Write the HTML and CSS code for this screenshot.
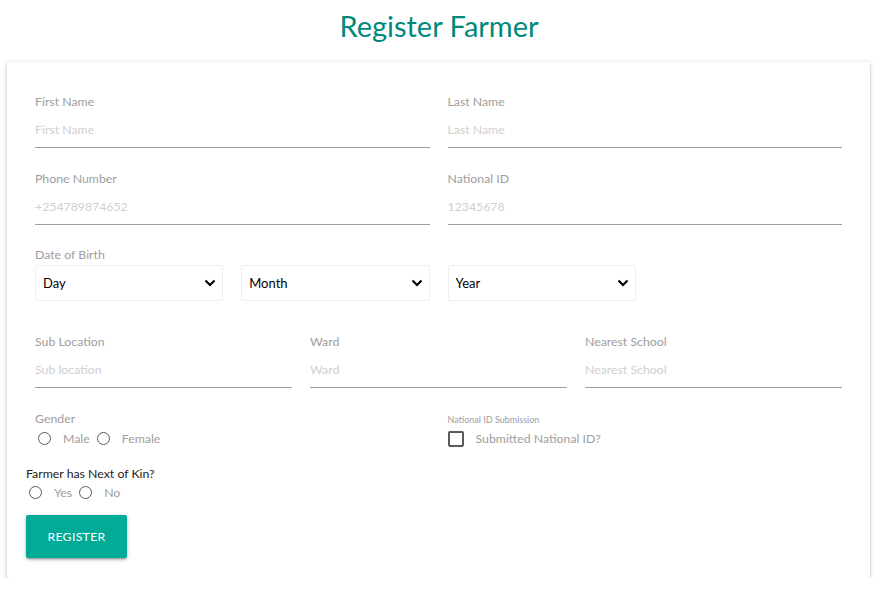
FILE: index.html
```html
<!DOCTYPE html>
<html lang="en">
<head>
<meta charset="utf-8">
<title>Register Farmer</title>
<link rel="stylesheet" href="styles.css">
</head>
<body>
<h1 class="title">Register Farmer</h1>
<form class="card">
  <div class="fields">
    <div class="row row-2">
      <div class="field">
        <label class="label">First Name</label>
        <input class="input" type="text" placeholder="First Name">
      </div>
      <div class="field">
        <label class="label">Last Name</label>
        <input class="input" type="text" placeholder="Last Name">
      </div>
    </div>
    <div class="row row-2">
      <div class="field">
        <label class="label">Phone Number</label>
        <input class="input" type="text" placeholder="+254789874652">
      </div>
      <div class="field">
        <label class="label">National ID</label>
        <input class="input" type="text" placeholder="12345678">
      </div>
    </div>
    <div class="dob">
      <label class="label">Date of Birth</label>
      <div class="row row-4">
        <select class="select"><option>Day</option></select>
        <select class="select"><option>Month</option></select>
        <select class="select"><option>Year</option></select>
      </div>
    </div>
    <div class="row row-3">
      <div class="field">
        <label class="label">Sub Location</label>
        <input class="input" type="text" placeholder="Sub location">
      </div>
      <div class="field">
        <label class="label">Ward</label>
        <input class="input" type="text" placeholder="Ward">
      </div>
      <div class="field">
        <label class="label">Nearest School</label>
        <input class="input" type="text" placeholder="Nearest School">
      </div>
    </div>
    <div class="row row-2 choices">
      <div class="group">
        <span class="label">Gender</span>
        <div class="options">
          <label class="option"><span class="radio"></span><span class="opt-text">Male</span></label>
          <label class="option"><span class="radio"></span><span class="opt-text">Female</span></label>
        </div>
      </div>
      <div class="group">
        <span class="label small">National ID Submission</span>
        <div class="options">
          <label class="option check-option"><span class="checkbox"></span><span class="opt-text">Submitted National ID?</span></label>
        </div>
      </div>
    </div>
  </div>
  <div class="kin">
    <span class="kin-label">Farmer has Next of Kin?</span>
    <div class="options">
      <label class="option"><span class="radio"></span><span class="opt-text">Yes</span></label>
      <label class="option"><span class="radio"></span><span class="opt-text">No</span></label>
    </div>
  </div>
  <button class="btn" type="button">REGISTER</button>
</form>
</body>
</html>
```
FILE: styles.css
```css
* { box-sizing: border-box; }
html, body { margin: 0; background: #fff; }
body {
  font-family: Lato, "Open Sans", sans-serif;
  color: #9e9e9e;
}
.title {
  margin: 10px 0 21px;
  text-align: center;
  font-weight: 400;
  font-size: 29px;
  line-height: 31px;
  color: #00897b;
}
.card {
  margin: 0 8px 0 7px;
  background: #fff;
  border-radius: 2px;
  box-shadow: 0 2px 2px 0 rgba(0,0,0,.14), 0 3px 1px -2px rgba(0,0,0,.12), 0 1px 5px 0 rgba(0,0,0,.2);
  padding: 31px 19px 20px;
}
.fields { padding: 0 9px; }
.row { display: grid; column-gap: 18px; }
.row-2 { grid-template-columns: 1fr 1fr; }
.row-3 { grid-template-columns: 1fr 1fr 1fr; }
.row-4 { grid-template-columns: repeat(4, 1fr); }
.field { display: flex; flex-direction: column; }
.row-2, .row-3 { margin-bottom: 22px; }
.label {
  display: block;
  font-size: 12.3px;
  line-height: 16px;
  color: #9e9e9e;
}
.field .label { padding-top: 1px; }
.label.small { font-size: 9px; line-height: 14px; margin-top: 2px; }
.input {
  height: 38px;
  border: 0;
  border-bottom: 1px solid #9e9e9e;
  padding: 2px 0 0;
  font: inherit;
  font-size: 12.3px;
  color: #333;
  outline: none;
  background: transparent;
}
.input::placeholder { color: #cfcfcf; }
.dob { margin-bottom: 32px; }
.dob .label { margin-bottom: 2px; }
.select {
  appearance: none;
  -webkit-appearance: none;
  height: 36px;
  border: 1px solid #efefef;
  border-radius: 2px;
  background: #fff url("data:image/svg+xml;utf8,<svg xmlns='http://www.w3.org/2000/svg' width='12' height='8' viewBox='0 0 12 8'><path d='M1.5 1.5l4.5 4.5 4.5-4.5' fill='none' stroke='black' stroke-width='2.2'/></svg>") no-repeat right 6px center;
  padding: 0 7px;
  font-family: Lato, sans-serif;
  font-size: 13px;
  color: #000;
}
.choices { margin-bottom: 18px; padding-top: 1px; }
.group { display: flex; flex-direction: column; }
.options { display: flex; align-items: center; height: 19px; margin-top: 2px; }
.option { display: flex; align-items: center; font-size: 12.3px; color: #9e9e9e; }
.radio {
  width: 13px; height: 13px;
  border: 1.5px solid #5a5a5a;
  border-radius: 50%;
  margin: 0 12px 0 3px;
}
.opt-text { margin-right: 4px; }
.checkbox {
  width: 16px; height: 16px;
  border: 2px solid #5a5a5a;
  border-radius: 2px;
  margin-right: 12px;
}
.kin { margin-bottom: 13px; }
.kin .options { margin-top: 1px; }
.kin-label { display: block; font-size: 12.3px; line-height: 16px; color: #212121; }
.btn {
  display: block;
  width: 101px;
  height: 43px;
  border: 0;
  border-radius: 2px;
  background: #00ab98;
  color: #fff;
  font-family: Lato, sans-serif;
  font-size: 12.3px;
  letter-spacing: .3px;
  box-shadow: 0 2px 2px 0 rgba(0,0,0,.14), 0 3px 1px -2px rgba(0,0,0,.12), 0 1px 5px 0 rgba(0,0,0,.2);
}
```
